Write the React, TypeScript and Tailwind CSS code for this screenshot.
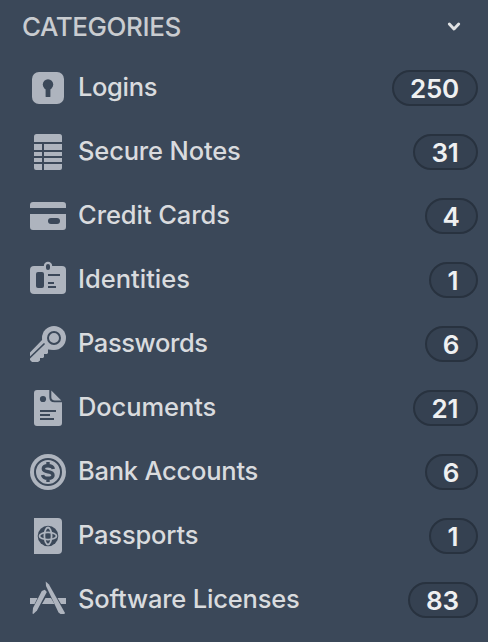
import type { ReactNode } from "react";

const BG = "#3b4859";

const icons: Record<string, ReactNode> = {
  login: (
    <>
      <rect x="4" y="4" width="32" height="32" rx="7" />
      <circle cx="20" cy="16.5" r="5.2" fill={BG} />
      <rect x="17.6" y="18" width="4.8" height="11" rx="0.6" fill={BG} />
    </>
  ),
  note: (
    <>
      <path d="M6 10V4.5A2.5 2.5 0 0 1 8.500 2H31.500A2.500 2.500 0 0 1 34 4.500V10Z" />
      <path d="M6 12H14V18H6ZM16 12H34V18H16ZM6 20H14V24H6ZM16 20H34V24H16ZM6 26H14V30H6ZM16 26H34V30H16ZM6 32H14V38H8A2 2 0 0 1 6 36ZM16 32H34V36A2 2 0 0 1 32 38H16Z" />
    </>
  ),
  card: (
    <>
      <path d="M2 12V9A3 3 0 0 1 5 6H35A3 3 0 0 1 38 9V12ZM2 18H38V31A3 3 0 0 1 35 34H5A3 3 0 0 1 2 31Z" />
      <rect x="20" y="22" width="12" height="6" rx="3" fill={BG} />
    </>
  ),
  identity: (
    <>
      <rect x="2" y="6" width="36" height="28" rx="4" />
      <circle cx="20" cy="6" r="4.200" />
      <rect x="18" y="4" width="4" height="6" rx="2" fill={BG} />
      <rect x="8" y="12" width="8" height="16" rx="2" fill={BG} />
      <path d="M20 14H32V16H20ZM20 22H26V24H20ZM20 26H28V28H20Z" fill={BG} />
    </>
  ),
  key: (
    <>
      <circle cx="26" cy="14" r="12" />
      <path d="M15 15L2 28.500V36L4 38H10L12 36.500V34H15L16 33V30H19L20 29V25.500H26Z" />
      <circle cx="26" cy="14" r="6" fill="none" stroke={BG} strokeWidth="2" />
      <path d="M1.500 34L16 20" stroke={BG} strokeWidth="1.700" strokeLinecap="round" />
    </>
  ),
  document: (
    <>
      <path d="M9 2H21.300V9C21.300 12.500 23 14.300 26.500 14.300H34V35A3 3 0 0 1 31 38H9A3 3 0 0 1 6 35V5A3 3 0 0 1 9 2Z" />
      <path d="M23.300 2.600L33.300 12.500H27C24.500 12.500 23.300 11.300 23.300 9Z" />
      <circle cx="15" cy="11" r="3.100" fill={BG} />
      <path d="M12 22H28V24H12ZM12 26H22V28H12ZM12 30H26V32H12Z" fill={BG} />
    </>
  ),
  bank: (
    <>
      <circle cx="20" cy="20" r="18" />
      <circle cx="20" cy="20" r="13" fill="none" stroke={BG} strokeWidth="2" />
      <path
        d="M25.300 17C25 14.700 23 13.700 20 13.700C17 13.700 15.300 14.700 15.300 16.700C15.300 18.800 17 19.300 20 19.800C23 20.300 25 21 25 23.300C25 25.300 23 26.300 20 26.300C17 26.300 15 25.400 14.600 23M20 10V14M20 26V30"
        fill="none"
        stroke={BG}
        strokeWidth="3.400"
      />
    </>
  ),
  passport: (
    <>
      <path d="M6 2H30A4 4 0 0 1 34 6V34A4 4 0 0 1 30 38H6Z" />
      <circle cx="20" cy="20" r="10.300" fill={BG} />
      <g fill="none" stroke="#aeb4be" strokeWidth="1.800">
        <ellipse cx="20" cy="20" rx="3.600" ry="8.500" />
        <ellipse cx="20" cy="20" rx="8.500" ry="3.600" />
      </g>
    </>
  ),
  software: (
    <>
      <path d="M2 18H9.500L6.500 24H2ZM17.500 18H23L26.500 24H14ZM29.500 18H38V24H33Z" />
      <path d="M13.800 11L16.800 9.800L18.800 12L9 30.500L5.300 34L4.500 33.500L5 28Z" />
      <path d="M17.700 1.500L21 4.500L37 33L36.300 34H32.500L30.500 32.500L18 6Z" />
    </>
  ),
};

const categories = [
  { icon: "login", label: "Logins", count: 250, width: "w-[86px]", tracking: "tracking-[-0.35px]" },
  { icon: "note", label: "Secure Notes", count: 31, width: "w-[65px]", tracking: "tracking-[-0.16px]" },
  { icon: "card", label: "Credit Cards", count: 4, width: "w-[53px]", tracking: "tracking-[-0.07px]" },
  { icon: "identity", label: "Identities", count: 1, width: "w-[49px]", tracking: "tracking-[0px]" },
  { icon: "key", label: "Passwords", count: 6, width: "w-[53px]", tracking: "tracking-[-0.4px]" },
  { icon: "document", label: "Documents", count: 21, width: "w-[65px]", tracking: "tracking-[-0.09px]" },
  { icon: "bank", label: "Bank Accounts", count: 6, width: "w-[53px]", tracking: "tracking-[-0.24px]" },
  { icon: "passport", label: "Passports", count: 1, width: "w-[49px]", tracking: "tracking-[-0.18px]" },
  { icon: "software", label: "Software Licenses", count: 83, width: "w-[70px]", tracking: "tracking-[-0.19px]" },
];

export default function App() {
  return (
    <div className="h-[642px] w-[488px] overflow-hidden bg-[#3b4859] font-['Inter','Liberation_Sans',sans-serif]">
      <header className="flex h-14 items-center justify-between pr-[26px] pb-[2px] pl-[22px]">
        <h2 className="text-[26px] leading-8 font-[450] tracking-[-0.43px] text-[#c9ccd0]">CATEGORIES</h2>
        <svg width="16" height="12" viewBox="0 0 16 12" fill="none" className="mb-[3px]">
          <path d="M3.300 4L8 9L12.700 4" stroke="#e0e2e4" strokeWidth="2.900" strokeLinecap="round" strokeLinejoin="round" />
        </svg>
      </header>
      <ul>
        {categories.map((c) => (
          <li key={c.label} className="flex h-16 items-center pr-[10px] pl-7">
            <svg width="40" height="40" viewBox="0 0 40 40" fill="#aeb4be" className="shrink-0">
              {icons[c.icon]}
            </svg>
            <span className={`ml-[10px] pb-[2px] text-[25.5px] leading-8 font-[450] whitespace-nowrap text-[#d9dbde] ${c.tracking}`}>
              {c.label}
            </span>
            <span className={`ml-auto flex h-9 items-center justify-center rounded-full border-2 border-[#28323f] bg-[#354151] pt-[1px] pr-[1px] text-[26px] leading-8 font-semibold tracking-[-0.2px] text-[#eff0f1] ${c.width}`}>
              {c.count}
            </span>
          </li>
        ))}
      </ul>
    </div>
  );
}
